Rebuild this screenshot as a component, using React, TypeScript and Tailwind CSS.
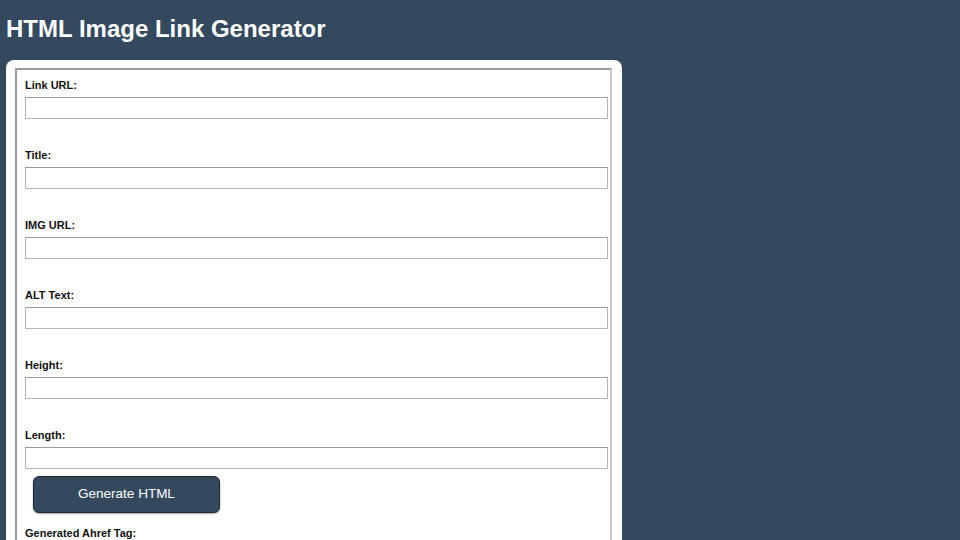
const fields = ["Link URL:", "Title:", "IMG URL:", "ALT Text:", "Height:", "Length:"];

export default function App() {
  return (
    <div className="min-h-[540px] bg-[#34495e] px-[6px] pt-[15px] font-['Liberation_Sans',Arial,sans-serif]">
      <h1 className="mb-[17px] text-[24px] font-bold leading-[28px] text-white">HTML Image Link Generator</h1>
      <div className="w-[616px] rounded-t-lg bg-white pl-[9px] pr-[10px] pt-[8px] pb-[10px]">
        <fieldset className="border-2 border-[#9a9a9a] border-b-[#c8c8c8] border-r-[#c8c8c8] pl-[8px] pr-[2px] pt-[8px]">
          {fields.map((label, i) => (
            <div key={label} className={i === fields.length - 1 ? "" : "mb-[29px]"}>
              <label className="block text-[11px] font-bold leading-[14px] text-[#111]">{label}</label>
              <input
                type="text"
                className="mt-[5px] block h-[22px] w-full border border-[#b5b5b5] border-t-[#9c9c9c] bg-white px-1 text-[13px] outline-none"
              />
            </div>
          ))}
          <button
            type="button"
            className="ml-[8px] mt-[7px] h-[37px] w-[187px] rounded-[6px] border border-[#1c2833] bg-[#34495e] text-[13.5px] text-white shadow-[0_1px_2px_rgba(0,0,0,0.35)]"
          >
            Generate HTML
          </button>
          <label className="mt-[13px] block text-[11px] font-bold leading-[14px] text-[#111]">Generated Ahref Tag:</label>
          <textarea className="mt-[4px] block h-[60px] w-full border border-[#b5b5b5] bg-white" />
        </fieldset>
      </div>
    </div>
  );
}
